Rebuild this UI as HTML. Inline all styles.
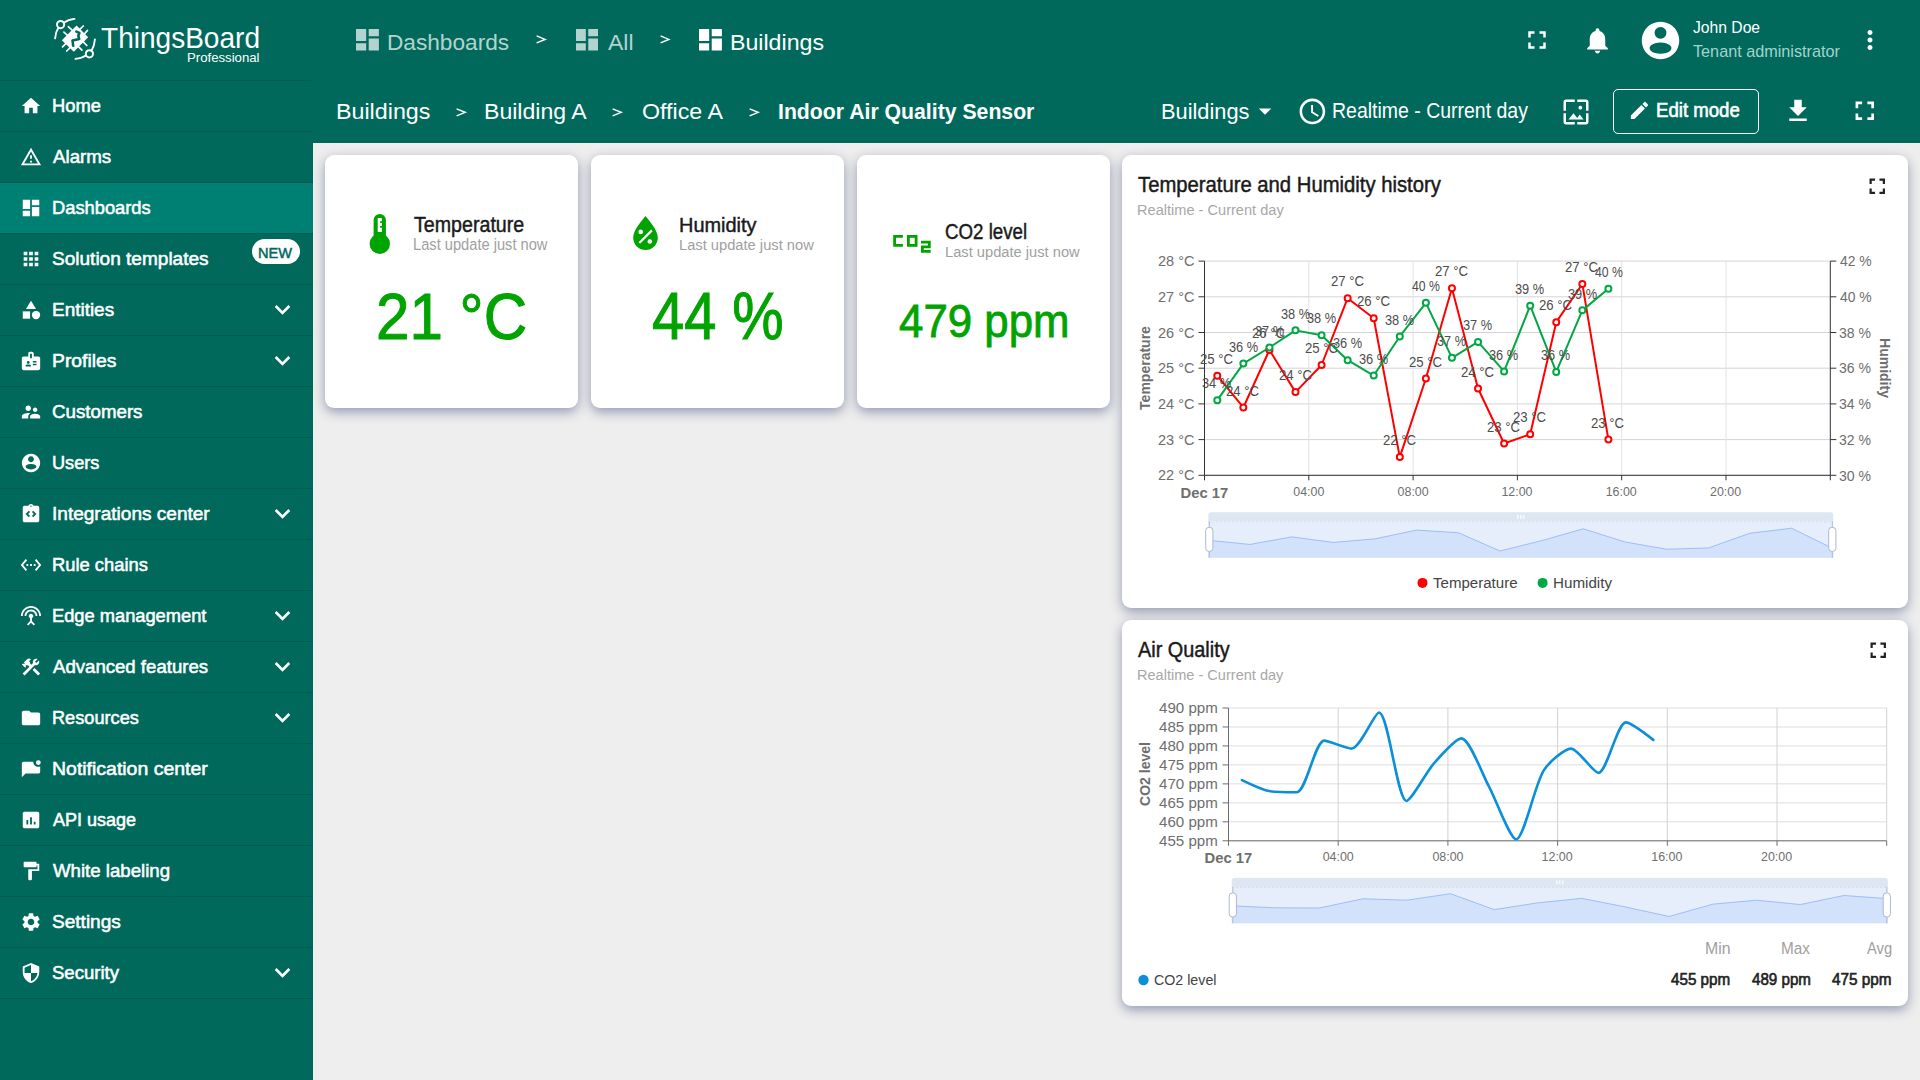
<!DOCTYPE html><html><head><meta charset="utf-8"><title>ThingsBoard</title><style>
*{margin:0;padding:0;box-sizing:border-box}
html,body{width:1920px;height:1080px;overflow:hidden;background:#eee;font-family:"Liberation Sans",sans-serif}
.abs{position:absolute}
.t{position:absolute;white-space:nowrap;line-height:1}
.c{transform:translate(-50%,-50%)}
.r{transform:translate(-100%,-50%)}
.l{transform:translate(0,-50%)}
.card{position:absolute;background:#fff;border-radius:9px;box-shadow:0 4px 12px rgba(25,40,95,0.42)}
</style></head><body>
<div class="abs" style="left:0;top:0;width:313px;height:1080px;background:#00695c"></div>
<svg class="abs" style="left:50px;top:14px;width:50px;height:50px" viewBox="0 0 50 50" fill="none" stroke="#fff" stroke-linecap="round">
  <circle cx="10.6" cy="10.6" r="3.6" stroke-width="2"/>
  <path d="M14.2 8.6 Q18 5.6 24.5 4.9" stroke-width="1.9"/>
  <path d="M8.4 13.8 Q5.6 18 5.1 24.3" stroke-width="1.9"/>
  <circle cx="39.4" cy="39.8" r="3.6" stroke-width="2"/>
  <path d="M35.8 41.6 Q32 44.4 25.5 44.9" stroke-width="1.9"/>
  <path d="M41.6 36.4 Q44.4 32 44.9 25.5" stroke-width="1.9"/>
  <path d="M26.6 11.6 L38.2 23.2 L23.8 37.8 L11.8 26.2 Z" fill="#fff" stroke="none"/>
  <path d="M13.9 18.1 L17.5 21.4 M18.3 12.7 L21.8 15.8 M29.5 15.6 L33.3 12 M34.2 20.2 L37.5 16.4 M33 27.7 L36.8 31.5 M28.2 32.3 L31.9 36.1 M12.5 32.9 L16.3 29.1 M16.7 37 L20.4 33.3" stroke-width="1.7"/>
  <path d="M26.4 17.6 L29.4 18.9 L28.3 21.7 L29.2 25 L22.5 26.4 L23.2 31.8" stroke="#00695c" stroke-width="2.6" stroke-linejoin="round"/>
 </svg>
<div class="t" style="left:101.00px;top:24px;font-size:28.99px;font-weight:normal;color:#fff;transform:scaleX(0.9674);transform-origin:0 0;">ThingsBoard</div>
<div class="t" style="left:186.50px;top:52px;font-size:12.75px;font-weight:normal;color:#fff;transform:scaleX(1.0337);transform-origin:0 0;">Professional</div>
<div class="abs" style="left:0;top:80px;width:313px;height:1px;background:#005b50"></div>
<div class="abs" style="left:0;top:131px;width:313px;height:1px;background:#005b50"></div>
<svg class="abs" style="left:20px;top:95px;width:22px;height:22px;fill:#fff" viewBox="0 0 24 24"><path d="M10 20v-6h4v6h5v-8h3L12 3 2 12h3v8z"/></svg>
<div class="t" style="left:52.12px;top:96px;font-size:19.13px;font-weight:normal;color:#fff;transform:scaleX(0.9596);transform-origin:0 0;-webkit-text-stroke:0.55px #fff;">Home</div>
<div class="abs" style="left:0;top:182px;width:313px;height:1px;background:#005b50"></div>
<svg class="abs" style="left:20px;top:146px;width:22px;height:22px;fill:#fff" viewBox="0 0 24 24"><path d="M12 5.99L19.53 19H4.47L12 5.99M12 2L1 21h22L12 2zm1 14h-2v2h2v-2zm0-6h-2v4h2v-4z"/></svg>
<div class="t" style="left:53.10px;top:147px;font-size:19.13px;font-weight:normal;color:#fff;transform:scaleX(0.9792);transform-origin:0 0;-webkit-text-stroke:0.55px #fff;">Alarms</div>
<div class="abs" style="left:0;top:183px;width:313px;height:50px;background:#008073"></div>
<div class="abs" style="left:0;top:233px;width:313px;height:1px;background:#005b50"></div>
<svg class="abs" style="left:20px;top:197px;width:22px;height:22px;fill:#fff" viewBox="0 0 24 24"><path d="M3 13h8V3H3v10zm0 8h8v-6H3v6zm10 0h8V11h-8v10zm0-18v6h8V3h-8z"/></svg>
<div class="t" style="left:52.11px;top:198px;font-size:19.13px;font-weight:normal;color:#fff;transform:scaleX(0.9574);transform-origin:0 0;-webkit-text-stroke:0.55px #fff;">Dashboards</div>
<div class="abs" style="left:0;top:284px;width:313px;height:1px;background:#005b50"></div>
<svg class="abs" style="left:20px;top:248px;width:22px;height:22px;fill:#fff" viewBox="0 0 24 24"><path d="M4 8h4V4H4v4zm6 12h4v-4h-4v4zm-6 0h4v-4H4v4zm0-6h4v-4H4v4zm6 0h4v-4h-4v4zm6-10v4h4V4h-4zm-6 4h4V4h-4v4zm6 6h4v-4h-4v4zm0 6h4v-4h-4v4z"/></svg>
<div class="t" style="left:52.10px;top:249px;font-size:19.13px;font-weight:normal;color:#fff;transform:scaleX(0.9960);transform-origin:0 0;-webkit-text-stroke:0.55px #fff;">Solution templates</div>
<div class="abs" style="left:251.6px;top:239.3px;width:48.6px;height:25px;border-radius:12.5px;background:#fff"></div>
<div class="t" style="left:258.00px;top:245px;font-size:15.51px;font-weight:normal;color:#00695c;transform:scaleX(0.9401);transform-origin:0 0;-webkit-text-stroke:0.5px #00695c;">NEW</div>
<div class="abs" style="left:0;top:335px;width:313px;height:1px;background:#005b50"></div>
<svg class="abs" style="left:20px;top:299px;width:22px;height:22px;fill:#fff" viewBox="0 0 24 24"><path d="M12 2l-5.5 9h11z"/><circle cx="17.5" cy="17.5" r="4.5"/><path d="M3 13.5h8v8H3z"/></svg>
<div class="t" style="left:52.12px;top:300px;font-size:19.13px;font-weight:normal;color:#fff;transform:scaleX(0.9912);transform-origin:0 0;-webkit-text-stroke:0.55px #fff;">Entities</div>
<svg class="abs" style="left:267.1px;top:294.3px;width:31px;height:31px;fill:#fff" viewBox="0 0 24 24"><path d="M16.59 8.59L12 13.17 7.41 8.59 6 10l6 6 6-6z"/></svg>
<div class="abs" style="left:0;top:386px;width:313px;height:1px;background:#005b50"></div>
<svg class="abs" style="left:20px;top:350px;width:22px;height:22px;fill:#fff" viewBox="0 0 24 24"><path d="M20 7h-5V4c0-1.1-.9-2-2-2h-2c-1.1 0-2 .9-2 2v3H4c-1.1 0-2 .9-2 2v11c0 1.1.9 2 2 2h16c1.1 0 2-.9 2-2V9c0-1.1-.9-2-2-2zM9 12c.83 0 1.5.67 1.5 1.5S9.83 15 9 15s-1.5-.67-1.5-1.5S8.17 12 9 12zm3 6H6v-.43c0-.6.36-1.15.92-1.39.64-.28 1.34-.43 2.08-.43s1.44.15 2.08.43c.55.24.92.78.92 1.39V18zm1-9h-2V4h2v5zm5 7.5h-4V15h4v1.5zm0-3h-4V12h4v1.5z"/></svg>
<div class="t" style="left:52.12px;top:351px;font-size:19.13px;font-weight:normal;color:#fff;transform:scaleX(1.0102);transform-origin:0 0;-webkit-text-stroke:0.55px #fff;">Profiles</div>
<svg class="abs" style="left:267.1px;top:345.3px;width:31px;height:31px;fill:#fff" viewBox="0 0 24 24"><path d="M16.59 8.59L12 13.17 7.41 8.59 6 10l6 6 6-6z"/></svg>
<div class="abs" style="left:0;top:437px;width:313px;height:1px;background:#005b50"></div>
<svg class="abs" style="left:20px;top:401px;width:22px;height:22px;fill:#fff" viewBox="0 0 24 24"><path d="M16.5 12c1.38 0 2.49-1.12 2.49-2.5S17.88 7 16.5 7C15.12 7 14 8.12 14 9.5s1.12 2.5 2.5 2.5zM9 11c1.66 0 2.99-1.34 2.99-3S10.66 5 9 5C7.34 5 6 6.34 6 8s1.34 3 3 3zm7.5 3c-1.83 0-5.5.92-5.5 2.75V19h11v-2.25c0-1.83-3.67-2.75-5.5-2.75zM9 13c-2.33 0-7 1.17-7 3.5V19h7v-2.25c0-.85.33-2.34 2.37-3.47C10.5 13.1 9.66 13 9 13z"/></svg>
<div class="t" style="left:52.10px;top:402px;font-size:19.13px;font-weight:normal;color:#fff;transform:scaleX(0.9794);transform-origin:0 0;-webkit-text-stroke:0.55px #fff;">Customers</div>
<div class="abs" style="left:0;top:488px;width:313px;height:1px;background:#005b50"></div>
<svg class="abs" style="left:20px;top:452px;width:22px;height:22px;fill:#fff" viewBox="0 0 24 24"><path fill-rule="evenodd" d="M12 2a10 10 0 1 0 0.001 0zM12 4.75a3.15 3.15 0 1 0 0.001 0zM12 13.0a5.85 3.05 0 1 0 0.001 0z"/></svg>
<div class="t" style="left:52.12px;top:453px;font-size:19.13px;font-weight:normal;color:#fff;transform:scaleX(0.9496);transform-origin:0 0;-webkit-text-stroke:0.55px #fff;">Users</div>
<div class="abs" style="left:0;top:539px;width:313px;height:1px;background:#005b50"></div>
<svg class="abs" style="left:20px;top:503px;width:22px;height:22px;fill:#fff" viewBox="0 0 24 24"><path d="M19 3h-4.18C14.4 1.84 13.3 1 12 1s-2.4.84-2.82 2H5c-1.1 0-2 .9-2 2v14c0 1.1.9 2 2 2h14c1.1 0 2-.9 2-2V5c0-1.1-.9-2-2-2zM11 14.17l-1.41 1.42L6 12l3.59-3.59L11 9.83 8.83 12 11 14.17zM12 4.25c-.41 0-.75-.34-.75-.75s.34-.75.75-.75.75.34.75.75-.34.75-.75.75zm2.41 11.34L13 14.17 15.17 12 13 9.83l1.41-1.42L18 12l-3.59 3.59z"/></svg>
<div class="t" style="left:52.11px;top:504px;font-size:19.13px;font-weight:normal;color:#fff;transform:scaleX(0.9963);transform-origin:0 0;-webkit-text-stroke:0.55px #fff;">Integrations center</div>
<svg class="abs" style="left:267.1px;top:498.3px;width:31px;height:31px;fill:#fff" viewBox="0 0 24 24"><path d="M16.59 8.59L12 13.17 7.41 8.59 6 10l6 6 6-6z"/></svg>
<div class="abs" style="left:0;top:590px;width:313px;height:1px;background:#005b50"></div>
<svg class="abs" style="left:20px;top:554px;width:22px;height:22px;fill:#fff" viewBox="0 0 24 24"><path d="M7.77 6.76L6.23 5.48.82 12l5.41 6.52 1.54-1.28L3.42 12l4.35-5.24zM7 13h2v-2H7v2zm10-2h-2v2h2v-2zm-6 2h2v-2h-2v2zm6.77-7.52l-1.54 1.28L20.58 12l-4.35 5.24 1.54 1.28L23.18 12l-5.41-6.52z"/></svg>
<div class="t" style="left:52.11px;top:555px;font-size:19.13px;font-weight:normal;color:#fff;transform:scaleX(0.9597);transform-origin:0 0;-webkit-text-stroke:0.55px #fff;">Rule chains</div>
<div class="abs" style="left:0;top:641px;width:313px;height:1px;background:#005b50"></div>
<svg class="abs" style="left:20px;top:605px;width:22px;height:22px;fill:#fff" viewBox="0 0 24 24"><path d="M12 5c-3.87 0-7 3.13-7 7h2c0-2.76 2.24-5 5-5s5 2.24 5 5h2c0-3.87-3.13-7-7-7zm1 9.29c.88-.39 1.5-1.26 1.5-2.29 0-1.38-1.12-2.5-2.5-2.5S9.5 10.62 9.5 12c0 1.020.62 1.9 1.5 2.29v3.3L7.59 21 9 22.41l3-3 3 3L16.41 21 13 17.59v-3.3zM12 1C5.93 1 1 5.93 1 12h2c0-4.970 4.030-9 9-9s9 4.03 9 9h2c0-6.07-4.930-11-11-11z"/></svg>
<div class="t" style="left:52.10px;top:606px;font-size:19.13px;font-weight:normal;color:#fff;transform:scaleX(0.9561);transform-origin:0 0;-webkit-text-stroke:0.55px #fff;">Edge management</div>
<svg class="abs" style="left:267.1px;top:600.3px;width:31px;height:31px;fill:#fff" viewBox="0 0 24 24"><path d="M16.59 8.59L12 13.17 7.41 8.59 6 10l6 6 6-6z"/></svg>
<div class="abs" style="left:0;top:692px;width:313px;height:1px;background:#005b50"></div>
<svg class="abs" style="left:20px;top:656px;width:22px;height:22px;fill:#fff" viewBox="0 0 24 24"><path d="M13.783 15.172l2.121-2.121 5.996 5.996-2.121 2.121zM17.5 10c1.93 0 3.5-1.57 3.5-3.5 0-.58-.16-1.12-.41-1.6l-2.7 2.7-1.49-1.49 2.7-2.7c-.48-.25-1.02-.41-1.6-.41C15.57 3 14 4.57 14 6.5c0 .41.08.8.21 1.16l-1.85 1.85-1.78-1.78.71-.71-1.41-1.41L12 3.49c-1.17-1.17-3.07-1.17-4.24 0L4.22 7.03l1.41 1.41H2.81l-.71.71 3.54 3.54.71-.71V9.15l1.41 1.41.71-.71 1.78 1.78-7.41 7.410 2.12 2.12L16.34 9.79c.36.13.75.21 1.16.21z"/></svg>
<div class="t" style="left:53.10px;top:657px;font-size:19.13px;font-weight:normal;color:#fff;transform:scaleX(0.9731);transform-origin:0 0;-webkit-text-stroke:0.55px #fff;">Advanced features</div>
<svg class="abs" style="left:267.1px;top:651.3px;width:31px;height:31px;fill:#fff" viewBox="0 0 24 24"><path d="M16.59 8.59L12 13.17 7.41 8.59 6 10l6 6 6-6z"/></svg>
<div class="abs" style="left:0;top:743px;width:313px;height:1px;background:#005b50"></div>
<svg class="abs" style="left:20px;top:707px;width:22px;height:22px;fill:#fff" viewBox="0 0 24 24"><path d="M10 4H4c-1.1 0-1.99.9-1.99 2L2 18c0 1.1.9 2 2 2h16c1.1 0 2-.9 2-2V8c0-1.1-.9-2-2-2h-8l-2-2z"/></svg>
<div class="t" style="left:52.11px;top:708px;font-size:19.13px;font-weight:normal;color:#fff;transform:scaleX(0.9504);transform-origin:0 0;-webkit-text-stroke:0.55px #fff;">Resources</div>
<svg class="abs" style="left:267.1px;top:702.3px;width:31px;height:31px;fill:#fff" viewBox="0 0 24 24"><path d="M16.59 8.59L12 13.17 7.41 8.59 6 10l6 6 6-6z"/></svg>
<div class="abs" style="left:0;top:794px;width:313px;height:1px;background:#005b50"></div>
<svg class="abs" style="left:20px;top:758px;width:22px;height:22px;fill:#fff" viewBox="0 0 24 24"><circle cx="20" cy="5" r="2.6"/><path d="M15.6 4H4c-1.1 0-2 .9-2 2v15l4-4h14c1.1 0 2-.9 2-2V9.2c-.6.3-1.3.4-2 .4-3.1 0-5.6-2.5-5.6-5.6z"/></svg>
<div class="t" style="left:52.11px;top:759px;font-size:19.13px;font-weight:normal;color:#fff;transform:scaleX(1.0184);transform-origin:0 0;-webkit-text-stroke:0.55px #fff;">Notification center</div>
<div class="abs" style="left:0;top:845px;width:313px;height:1px;background:#005b50"></div>
<svg class="abs" style="left:20px;top:809px;width:22px;height:22px;fill:#fff" viewBox="0 0 24 24"><path d="M19 3H5c-1.1 0-2 .9-2 2v14c0 1.1.9 2 2 2h14c1.1 0 2-.9 2-2V5c0-1.1-.9-2-2-2zM9 17H7v-5h2v5zm4 0h-2V9h2v8zm4 0h-2v-3h2v3z"/></svg>
<div class="t" style="left:53.10px;top:810px;font-size:19.13px;font-weight:normal;color:#fff;transform:scaleX(0.9426);transform-origin:0 0;-webkit-text-stroke:0.55px #fff;">API usage</div>
<div class="abs" style="left:0;top:896px;width:313px;height:1px;background:#005b50"></div>
<svg class="abs" style="left:20px;top:860px;width:22px;height:22px;fill:#fff" viewBox="0 0 24 24"><path d="M18 4V3c0-.55-.45-1-1-1H5c-.55 0-1 .45-1 1v4c0 .55.45 1 1 1h12c.55 0 1-.45 1-1V6h1v4H9v11c0 .55.45 1 1 1h2c.55 0 1-.45 1-1v-9h8V4h-3z"/></svg>
<div class="t" style="left:53.10px;top:861px;font-size:19.13px;font-weight:normal;color:#fff;transform:scaleX(0.9748);transform-origin:0 0;-webkit-text-stroke:0.55px #fff;">White labeling</div>
<div class="abs" style="left:0;top:947px;width:313px;height:1px;background:#005b50"></div>
<svg class="abs" style="left:20px;top:911px;width:22px;height:22px;fill:#fff" viewBox="0 0 24 24"><path d="M19.14 12.94c.04-.3.06-.61.06-.94 0-.32-.02-.64-.07-.94l2.03-1.58c.18-.14.23-.41.12-.61l-1.92-3.32c-.12-.22-.37-.29-.59-.22l-2.39.96c-.5-.38-1.03-.7-1.62-.94l-.36-2.54c-.04-.24-.24-.41-.48-.41h-3.84c-.24 0-.43.17-.47.41l-.36 2.54c-.59.24-1.13.57-1.62.94l-2.39-.96c-.22-.08-.47 0-.59.22L2.74 8.87c-.12.21-.08.47.12.61l2.03 1.58c-.05.3-.09.63-.09.94s.02.64.07.94l-2.030 1.58c-.18.14-.23.41-.12.61l1.92 3.32c.12.22.37.29.59.22l2.39-.96c.5.38 1.03.7 1.62.94l.36 2.54c.05.24.24.41.48.41h3.84c.24 0 .44-.17.47-.41l.36-2.54c.59-.24 1.13-.56 1.62-.94l2.39.96c.22.08.47 0 .59-.22l1.92-3.32c.12-.22.07-.47-.12-.61l-2.01-1.58zM12 15.6c-1.98 0-3.6-1.62-3.6-3.6s1.62-3.6 3.6-3.6 3.6 1.62 3.6 3.6-1.62 3.6-3.6 3.6z"/></svg>
<div class="t" style="left:52.10px;top:912px;font-size:19.13px;font-weight:normal;color:#fff;transform:scaleX(0.9967);transform-origin:0 0;-webkit-text-stroke:0.55px #fff;">Settings</div>
<div class="abs" style="left:0;top:998px;width:313px;height:1px;background:#005b50"></div>
<svg class="abs" style="left:20px;top:962px;width:22px;height:22px;fill:#fff" viewBox="0 0 24 24"><path d="M12 1L3 5v6c0 5.55 3.84 10.74 9 12 5.16-1.26 9-6.45 9-12V5l-9-4zm0 10.99h7c-.53 4.12-3.28 7.790-7 8.94V12H5V6.3l7-3.11v8.8z"/></svg>
<div class="t" style="left:52.11px;top:963px;font-size:19.13px;font-weight:normal;color:#fff;transform:scaleX(0.9707);transform-origin:0 0;-webkit-text-stroke:0.55px #fff;">Security</div>
<svg class="abs" style="left:267.1px;top:957.3px;width:31px;height:31px;fill:#fff" viewBox="0 0 24 24"><path d="M16.59 8.59L12 13.17 7.41 8.59 6 10l6 6 6-6z"/></svg>
<div class="abs" style="left:313px;top:0;width:1607px;height:143px;background:#00695c"></div>
<svg class="abs" style="left:356.1px;top:29.3px;width:22.9px;height:21.4px;fill:#b3d3ce" viewBox="3 3 18 18" preserveAspectRatio="none"><path d="M3 13h8V3H3v10zm0 8h8v-6H3v6zm10 0h8V11h-8v10zm0-18v6h8V3h-8z"/></svg>
<div class="t" style="left:387.00px;top:32px;font-size:22.32px;font-weight:normal;color:#b3d3ce;transform:scaleX(1.0150);transform-origin:0 0;">Dashboards</div>

<svg class="abs" style="left:575.7px;top:29.3px;width:22.1px;height:21.4px;fill:#b3d3ce" viewBox="3 3 18 18" preserveAspectRatio="none"><path d="M3 13h8V3H3v10zm0 8h8v-6H3v6zm10 0h8V11h-8v10zm0-18v6h8V3h-8z"/></svg>
<div class="t" style="left:608.20px;top:32px;font-size:22.32px;font-weight:normal;color:#b3d3ce;transform:scaleX(1.0290);transform-origin:0 0;">All</div>
<svg class="abs" style="left:698.9px;top:29.3px;width:22.9px;height:21.4px;fill:#fff" viewBox="3 3 18 18" preserveAspectRatio="none"><path d="M3 13h8V3H3v10zm0 8h8v-6H3v6zm10 0h8V11h-8v10zm0-18v6h8V3h-8z"/></svg>
<div class="t" style="left:729.90px;top:32px;font-size:22.32px;font-weight:normal;color:#fff;transform:scaleX(1.0381);transform-origin:0 0;">Buildings</div>
<svg class="abs" style="left:1522.4px;top:25px;width:30px;height:30px;fill:#fff" viewBox="0 0 24 24"><path d="M7 14H5v5h5v-2H7v-3zm-2-4h2V7h3V5H5v5zm12 7h-3v2h5v-5h-2v3zM14 5v2h3v3h2V5h-5z"/></svg>
<svg class="abs" style="left:1582px;top:24.5px;width:31px;height:31px;fill:#fff" viewBox="0 0 24 24"><path d="M12 22c1.1 0 2-.9 2-2h-4c0 1.1.89 2 2 2zm6-6v-5c0-3.07-1.64-5.64-4.5-6.32V4c0-.83-.67-1.5-1.5-1.5s-1.5.67-1.5 1.5v.68C7.63 5.36 6 7.92 6 11v5l-2 2v1h16v-1l-2-2z"/></svg>
<svg class="abs" style="left:1637.5px;top:18px;width:45px;height:45px;fill:#fff" viewBox="0 0 24 24"><path fill-rule="evenodd" d="M12 2a10 10 0 1 0 0.001 0zM12 4.75a3.15 3.15 0 1 0 0.001 0zM12 13.0a5.85 3.05 0 1 0 0.001 0z"/></svg>
<div class="t" style="left:1692.90px;top:20px;font-size:16.88px;font-weight:normal;color:#fff;transform:scaleX(0.9293);transform-origin:0 0;">John Doe</div>
<div class="t" style="left:1692.90px;top:44px;font-size:16.96px;font-weight:normal;color:#a3d3cc;transform:scaleX(0.9572);transform-origin:0 0;">Tenant administrator</div>
<svg class="abs" style="left:1855px;top:25px;width:30px;height:30px;fill:#fff" viewBox="0 0 24 24"><path d="M12 8c1.1 0 2-.9 2-2s-.9-2-2-2-2 .9-2 2 .9 2 2 2zm0 2c-1.1 0-2 .9-2 2s.9 2 2 2 2-.9 2-2-.9-2-2-2zm0 6c-1.1 0-2 .9-2 2s.9 2 2 2 2-.9 2-2-.9-2-2-2z"/></svg>
<div class="t" style="left:336.29px;top:100px;font-size:22.90px;font-weight:normal;color:#fff;transform:scaleX(1.0162);transform-origin:0 0;">Buildings</div>
<div class="t" style="left:484.29px;top:100px;font-size:22.90px;font-weight:normal;color:#fff;transform:scaleX(1.0085);transform-origin:0 0;">Building A</div>
<div class="t" style="left:642.10px;top:100px;font-size:22.90px;font-weight:normal;color:#fff;transform:scaleX(1.0145);transform-origin:0 0;">Office A</div>
<div class="t" style="left:778.40px;top:101px;font-size:22.46px;font-weight:bold;color:#fff;transform:scaleX(0.9456);transform-origin:0 0;">Indoor Air Quality Sensor</div>
<div class="t" style="left:1160.80px;top:100px;font-size:22.90px;font-weight:normal;color:#fff;transform:scaleX(0.9520);transform-origin:0 0;">Buildings</div>
<svg class="abs" style="left:1249.5px;top:96px;width:30px;height:30px;fill:#fff" viewBox="0 0 24 24"><path d="M7 10l5 5 5-5z"/></svg>
<svg class="abs" style="left:1296.8px;top:95.5px;width:30.8px;height:30.8px;fill:#fff" viewBox="0 0 24 24"><path d="M11.99 2C6.47 2 2 6.48 2 12s4.47 10 9.99 10C17.52 22 22 17.52 22 12S17.52 2 11.99 2zM12 20c-4.42 0-8-3.58-8-8s3.58-8 8-8 8 3.58 8 8-3.58 8-8 8zm.5-13H11v6l5.25 3.15.75-1.23-4.5-2.67z"/></svg>
<div class="t" style="left:1331.80px;top:100px;font-size:22.32px;font-weight:normal;color:#fff;transform:scaleX(0.8728);transform-origin:0 0;">Realtime - Current day</div>
<svg class="abs" style="left:1560.5px;top:96.5px;width:30px;height:30px;fill:#fff" viewBox="0 0 24 24"><path d="M4 4h7V2H4c-1.1 0-2 .9-2 2v7h2V4zm6 9l-4 5h12l-3-4-2.03 2.71L10 13zm7-4.5c0-.83-.67-1.5-1.5-1.5S14 7.67 14 8.5s.67 1.5 1.5 1.5S17 9.33 17 8.5zM20 2h-7v2h7v7h2V4c0-1.1-.9-2-2-2zm0 18h-7v2h7c1.1 0 2-.9 2-2v-7h-2v7zM4 13H2v7c0 1.1.9 2 2 2h7v-2H4v-7z"/></svg>
<div class="abs" style="left:1613.3px;top:89.3px;width:146.2px;height:44.5px;border:1.3px solid #fff;border-radius:5px"></div>
<svg class="abs" style="left:1627.6px;top:98.9px;width:22.9px;height:22.9px;fill:#fff" viewBox="0 0 24 24"><path d="M3 17.25V21h3.75L17.81 9.94l-3.75-3.75L3 17.25zM20.71 7.04c.39-.39.39-1.02 0-1.41l-2.34-2.34c-.39-.39-1.02-.39-1.41 0l-1.83 1.83 3.75 3.75 1.83-1.83z"/></svg>
<div class="t" style="left:1656.01px;top:100px;font-size:20.07px;font-weight:normal;color:#fff;transform:scaleX(0.9281);transform-origin:0 0;-webkit-text-stroke:0.6px #fff;">Edit mode</div>
<svg class="abs" style="left:1782.5px;top:96.25px;width:30px;height:30px;fill:#fff" viewBox="0 0 24 24"><path d="M19 9h-4V3H9v6H5l7 7 7-7zM5 18v2h14v-2H5z"/></svg>
<svg class="abs" style="left:1849.2px;top:95.3px;width:31.5px;height:31.5px;fill:#fff" viewBox="0 0 24 24"><path d="M7 14H5v5h5v-2H7v-3zm-2-4h2V7h3V5H5v5zm12 7h-3v2h5v-5h-2v3zM14 5v2h3v3h2V5h-5z"/></svg>
<svg class="abs" style="left:535.8px;top:34.8px;width:9.900000000000091px;height:8.800000000000004px;overflow:visible" viewBox="0 0 10 9" preserveAspectRatio="none"><path d="M0.6 0.9 L9.2 4.5 L0.6 8.1" fill="none" stroke="#fff" stroke-width="1.5"/></svg>
<svg class="abs" style="left:659.8px;top:34.8px;width:9.600000000000023px;height:8.800000000000004px;overflow:visible" viewBox="0 0 10 9" preserveAspectRatio="none"><path d="M0.6 0.9 L9.2 4.5 L0.6 8.1" fill="none" stroke="#fff" stroke-width="1.5"/></svg>
<svg class="abs" style="left:455.8px;top:108px;width:10.0px;height:8.700000000000003px;overflow:visible" viewBox="0 0 10 9" preserveAspectRatio="none"><path d="M0.6 0.9 L9.2 4.5 L0.6 8.1" fill="none" stroke="#fff" stroke-width="1.5"/></svg>
<svg class="abs" style="left:612.3px;top:108px;width:10.0px;height:8.700000000000003px;overflow:visible" viewBox="0 0 10 9" preserveAspectRatio="none"><path d="M0.6 0.9 L9.2 4.5 L0.6 8.1" fill="none" stroke="#fff" stroke-width="1.5"/></svg>
<svg class="abs" style="left:749.2px;top:108px;width:9.899999999999977px;height:8.700000000000003px;overflow:visible" viewBox="0 0 10 9" preserveAspectRatio="none"><path d="M0.6 0.9 L9.2 4.5 L0.6 8.1" fill="none" stroke="#fff" stroke-width="1.5"/></svg>
<div class="card" style="left:325px;top:155px;width:253px;height:253px"></div>
<div class="card" style="left:591px;top:155px;width:253px;height:253px"></div>
<div class="card" style="left:857px;top:155px;width:253px;height:253px"></div>
<div class="card" style="left:1122.2px;top:155px;width:786px;height:453px"></div>
<div class="card" style="left:1122.2px;top:620px;width:786px;height:386px"></div>
<svg class="abs" style="left:360px;top:205px;width:40px;height:55px" viewBox="360 205 40 55">
      <rect x="373.6" y="213.9" width="12.3" height="28" rx="6.1" fill="#00a300"/>
      <circle cx="379.8" cy="243.8" r="10.2" fill="#00a300"/>
      <rect x="377.7" y="218" width="4.2" height="14" rx="0.5" fill="#fff"/>
      <rect x="380" y="221.2" width="2.2" height="1.6" fill="#00a300"/>
      <rect x="380" y="226" width="2.2" height="1.6" fill="#00a300"/>
    </svg>
<div class="t" style="left:414.00px;top:214px;font-size:21.74px;font-weight:normal;color:#1a1a1a;transform:scaleX(0.9034);transform-origin:0 0;-webkit-text-stroke:0.45px #1a1a1a;">Temperature</div>
<div class="t" style="left:413.00px;top:237px;font-size:15.65px;font-weight:normal;color:#a0a0a0;transform:scaleX(0.9371);transform-origin:0 0;">Last update just now</div>
<div class="t" style="left:376.22px;top:285px;font-size:64.86px;font-weight:normal;color:#00a300;transform:scaleX(0.9271);transform-origin:0 0;-webkit-text-stroke:1.0px #00a300;">21 °C</div>
<svg class="abs" style="left:625px;top:210px;width:40px;height:45px" viewBox="625 210 40 45">
      <path d="M645.5 216 C650 222 657.8 230 657.8 237.8 A12.3 12.3 0 0 1 633.2 237.8 C633.2 230 641 222 645.5 216Z" fill="#00a300"/>
      <circle cx="640.7" cy="231.9" r="2.3" fill="#fff"/>
      <circle cx="649.8" cy="241.5" r="2.3" fill="#fff"/>
      <path d="M639.3 243 L651.9 230.4" stroke="#fff" stroke-width="2.2"/>
    </svg>
<div class="t" style="left:679.01px;top:215px;font-size:20.87px;font-weight:normal;color:#1a1a1a;transform:scaleX(0.9560);transform-origin:0 0;-webkit-text-stroke:0.45px #1a1a1a;">Humidity</div>
<div class="t" style="left:679.00px;top:237px;font-size:15.22px;font-weight:normal;color:#a0a0a0;transform:scaleX(0.9653);transform-origin:0 0;">Last update just now</div>
<div class="t" style="left:651.91px;top:283px;font-size:66.67px;font-weight:normal;color:#00a300;transform:scaleX(0.8670);transform-origin:0 0;-webkit-text-stroke:1.0px #00a300;">44 %</div>
<svg class="abs" style="left:890px;top:230px;width:45px;height:26px" viewBox="890 230 45 26" fill="none" stroke="#00a300" stroke-width="2.8">
      <path d="M902.9 236.4 H894.6 V245.4 H902.9"/>
      <rect x="908.4" y="236.4" width="7.7" height="9" />
      <path d="M921 242.2 H929.3 V246.8 H922.4 V251.4 H930.7" />
    </svg>
<div class="t" style="left:945.01px;top:222px;font-size:21.29px;font-weight:normal;color:#1a1a1a;transform:scaleX(0.8792);transform-origin:0 0;-webkit-text-stroke:0.45px #1a1a1a;">CO2 level</div>
<div class="t" style="left:945.00px;top:244px;font-size:15.51px;font-weight:normal;color:#a0a0a0;transform:scaleX(0.9473);transform-origin:0 0;">Last update just now</div>
<div class="t" style="left:899.00px;top:298px;font-size:46.38px;font-weight:normal;color:#00a300;transform:scaleX(0.9452);transform-origin:0 0;-webkit-text-stroke:0.8px #00a300;">479 ppm</div>
<div class="t" style="left:1138.00px;top:175px;font-size:21.45px;font-weight:normal;color:#1a1a1a;transform:scaleX(0.9449);transform-origin:0 0;-webkit-text-stroke:0.45px #1a1a1a;">Temperature and Humidity history</div>
<div class="t" style="left:1137.00px;top:202px;font-size:15.51px;font-weight:normal;color:#a8a8a8;transform:scaleX(0.9408);transform-origin:0 0;">Realtime - Current day</div>
<svg class="abs" style="left:1864.2px;top:172.8px;width:26.5px;height:26.5px;fill:#222" viewBox="0 0 24 24"><path d="M7 14H5v5h5v-2H7v-3zm-2-4h2V7h3V5H5v5zm12 7h-3v2h5v-5h-2v3zM14 5v2h3v3h2V5h-5z"/></svg>
<svg class="abs" style="left:0;top:0;width:1920px;height:1080px;overflow:visible" viewBox="0 0 1920 1080">
<line x1="1204.5" y1="261.1" x2="1830.3" y2="261.1" stroke="#d4d4d4" stroke-width="1"/>
<line x1="1204.5" y1="296.8" x2="1830.3" y2="296.8" stroke="#d4d4d4" stroke-width="1"/>
<line x1="1204.5" y1="332.5" x2="1830.3" y2="332.5" stroke="#d4d4d4" stroke-width="1"/>
<line x1="1204.5" y1="368.2" x2="1830.3" y2="368.2" stroke="#d4d4d4" stroke-width="1"/>
<line x1="1204.5" y1="403.9" x2="1830.3" y2="403.9" stroke="#d4d4d4" stroke-width="1"/>
<line x1="1204.5" y1="439.6" x2="1830.3" y2="439.6" stroke="#d4d4d4" stroke-width="1"/>
<line x1="1204.5" y1="475.3" x2="1830.3" y2="475.3" stroke="#d4d4d4" stroke-width="1"/>
<line x1="1308.8" y1="261.1" x2="1308.8" y2="475.3" stroke="#e2e2e2" stroke-width="1"/>
<line x1="1413.1" y1="261.1" x2="1413.1" y2="475.3" stroke="#e2e2e2" stroke-width="1"/>
<line x1="1517.4" y1="261.1" x2="1517.4" y2="475.3" stroke="#e2e2e2" stroke-width="1"/>
<line x1="1621.7" y1="261.1" x2="1621.7" y2="475.3" stroke="#e2e2e2" stroke-width="1"/>
<line x1="1726" y1="261.1" x2="1726" y2="475.3" stroke="#e2e2e2" stroke-width="1"/>
<line x1="1204.5" y1="261.1" x2="1204.5" y2="475.3" stroke="#333" stroke-width="1"/>
<line x1="1830.3" y1="261.1" x2="1830.3" y2="475.3" stroke="#333" stroke-width="1"/>
<line x1="1204.5" y1="475.3" x2="1830.3" y2="475.3" stroke="#333" stroke-width="1"/>
<line x1="1198.5" y1="261.1" x2="1204.5" y2="261.1" stroke="#333" stroke-width="1"/>
<line x1="1830.3" y1="261.1" x2="1836.3" y2="261.1" stroke="#333" stroke-width="1"/>
<line x1="1198.5" y1="296.8" x2="1204.5" y2="296.8" stroke="#333" stroke-width="1"/>
<line x1="1830.3" y1="296.8" x2="1836.3" y2="296.8" stroke="#333" stroke-width="1"/>
<line x1="1198.5" y1="332.5" x2="1204.5" y2="332.5" stroke="#333" stroke-width="1"/>
<line x1="1830.3" y1="332.5" x2="1836.3" y2="332.5" stroke="#333" stroke-width="1"/>
<line x1="1198.5" y1="368.2" x2="1204.5" y2="368.2" stroke="#333" stroke-width="1"/>
<line x1="1830.3" y1="368.2" x2="1836.3" y2="368.2" stroke="#333" stroke-width="1"/>
<line x1="1198.5" y1="403.9" x2="1204.5" y2="403.9" stroke="#333" stroke-width="1"/>
<line x1="1830.3" y1="403.9" x2="1836.3" y2="403.9" stroke="#333" stroke-width="1"/>
<line x1="1198.5" y1="439.6" x2="1204.5" y2="439.6" stroke="#333" stroke-width="1"/>
<line x1="1830.3" y1="439.6" x2="1836.3" y2="439.6" stroke="#333" stroke-width="1"/>
<line x1="1198.5" y1="475.3" x2="1204.5" y2="475.3" stroke="#333" stroke-width="1"/>
<line x1="1830.3" y1="475.3" x2="1836.3" y2="475.3" stroke="#333" stroke-width="1"/>
<line x1="1204.5" y1="475.3" x2="1204.5" y2="480.3" stroke="#333" stroke-width="1"/>
<line x1="1308.8" y1="475.3" x2="1308.8" y2="480.3" stroke="#333" stroke-width="1"/>
<line x1="1413.1" y1="475.3" x2="1413.1" y2="480.3" stroke="#333" stroke-width="1"/>
<line x1="1517.4" y1="475.3" x2="1517.4" y2="480.3" stroke="#333" stroke-width="1"/>
<line x1="1621.7" y1="475.3" x2="1621.7" y2="480.3" stroke="#333" stroke-width="1"/>
<line x1="1726" y1="475.3" x2="1726" y2="480.3" stroke="#333" stroke-width="1"/>
<line x1="1830.3" y1="475.3" x2="1830.3" y2="480.3" stroke="#333" stroke-width="1"/>
<polyline fill="none" stroke="#ff0000" stroke-width="2" stroke-linejoin="round" points="1217.28,375.7 1243.35,407.47 1269.43,349.99 1295.5,392.12 1321.58,364.99 1347.65,298.23 1373.73,318.22 1399.8,457.09 1425.88,378.55 1451.95,288.23 1478.03,388.55 1504.1,443.53 1530.18,434.25 1556.25,322.15 1582.33,283.95 1608.4,439.6"/>
<polyline fill="none" stroke="#00a844" stroke-width="2" stroke-linejoin="round" points="1217.28,400.15 1243.35,363.56 1269.43,347.49 1295.5,330.36 1321.58,335.18 1347.65,360.17 1373.73,375.52 1399.8,336.43 1425.88,302.87 1451.95,357.85 1478.03,341.96 1504.1,371.41 1530.18,305.73 1556.25,371.95 1582.33,310.37 1608.4,288.77"/>
<circle cx="1217.28" cy="375.7" r="3" fill="#fff" stroke="#ff0000" stroke-width="2"/>
<circle cx="1243.35" cy="407.47" r="3" fill="#fff" stroke="#ff0000" stroke-width="2"/>
<circle cx="1269.43" cy="349.99" r="3" fill="#fff" stroke="#ff0000" stroke-width="2"/>
<circle cx="1295.5" cy="392.12" r="3" fill="#fff" stroke="#ff0000" stroke-width="2"/>
<circle cx="1321.58" cy="364.99" r="3" fill="#fff" stroke="#ff0000" stroke-width="2"/>
<circle cx="1347.65" cy="298.23" r="3" fill="#fff" stroke="#ff0000" stroke-width="2"/>
<circle cx="1373.73" cy="318.22" r="3" fill="#fff" stroke="#ff0000" stroke-width="2"/>
<circle cx="1399.8" cy="457.09" r="3" fill="#fff" stroke="#ff0000" stroke-width="2"/>
<circle cx="1425.88" cy="378.55" r="3" fill="#fff" stroke="#ff0000" stroke-width="2"/>
<circle cx="1451.95" cy="288.23" r="3" fill="#fff" stroke="#ff0000" stroke-width="2"/>
<circle cx="1478.03" cy="388.55" r="3" fill="#fff" stroke="#ff0000" stroke-width="2"/>
<circle cx="1504.1" cy="443.53" r="3" fill="#fff" stroke="#ff0000" stroke-width="2"/>
<circle cx="1530.18" cy="434.25" r="3" fill="#fff" stroke="#ff0000" stroke-width="2"/>
<circle cx="1556.25" cy="322.15" r="3" fill="#fff" stroke="#ff0000" stroke-width="2"/>
<circle cx="1582.33" cy="283.95" r="3" fill="#fff" stroke="#ff0000" stroke-width="2"/>
<circle cx="1608.4" cy="439.6" r="3" fill="#fff" stroke="#ff0000" stroke-width="2"/>
<circle cx="1217.28" cy="400.15" r="3" fill="#fff" stroke="#00a844" stroke-width="2"/>
<circle cx="1243.35" cy="363.56" r="3" fill="#fff" stroke="#00a844" stroke-width="2"/>
<circle cx="1269.43" cy="347.49" r="3" fill="#fff" stroke="#00a844" stroke-width="2"/>
<circle cx="1295.5" cy="330.36" r="3" fill="#fff" stroke="#00a844" stroke-width="2"/>
<circle cx="1321.58" cy="335.18" r="3" fill="#fff" stroke="#00a844" stroke-width="2"/>
<circle cx="1347.65" cy="360.17" r="3" fill="#fff" stroke="#00a844" stroke-width="2"/>
<circle cx="1373.73" cy="375.52" r="3" fill="#fff" stroke="#00a844" stroke-width="2"/>
<circle cx="1399.8" cy="336.43" r="3" fill="#fff" stroke="#00a844" stroke-width="2"/>
<circle cx="1425.88" cy="302.87" r="3" fill="#fff" stroke="#00a844" stroke-width="2"/>
<circle cx="1451.95" cy="357.85" r="3" fill="#fff" stroke="#00a844" stroke-width="2"/>
<circle cx="1478.03" cy="341.96" r="3" fill="#fff" stroke="#00a844" stroke-width="2"/>
<circle cx="1504.1" cy="371.41" r="3" fill="#fff" stroke="#00a844" stroke-width="2"/>
<circle cx="1530.18" cy="305.73" r="3" fill="#fff" stroke="#00a844" stroke-width="2"/>
<circle cx="1556.25" cy="371.95" r="3" fill="#fff" stroke="#00a844" stroke-width="2"/>
<circle cx="1582.33" cy="310.37" r="3" fill="#fff" stroke="#00a844" stroke-width="2"/>
<circle cx="1608.4" cy="288.77" r="3" fill="#fff" stroke="#00a844" stroke-width="2"/>
<path d="M1208.3,515.3 Q1208.3,512.3 1211.3,512.3 L1830.3,512.3 Q1833.3,512.3 1833.3,515.3 L1833.3,521.4 L1208.3,521.4 Z" fill="#dee6f2"/>
<rect x="1208.3" y="521.4" width="625" height="36.4" fill="#e6eefc"/>
<line x1="1208.3" y1="521.9" x2="1833.3" y2="521.9" stroke="#d0dcf0" stroke-width="1" stroke-dasharray="2,2"/>
<path d="M1208.3,540.28 L1249.97,544.45 L1291.63,536.9 L1333.3,542.44 L1374.97,538.87 L1416.63,530.1 L1458.3,532.73 L1499.97,550.97 L1541.63,540.66 L1583.3,528.79 L1624.97,541.97 L1666.63,549.19 L1708.3,547.97 L1749.97,533.24 L1791.63,528.22 L1833.3,548.68 L1833.3,557.8 L1208.3,557.8 Z" fill="#d3e2fb"/>
<path d="M1208.3,540.28 L1249.97,544.45 L1291.63,536.9 L1333.3,542.44 L1374.97,538.87 L1416.63,530.1 L1458.3,532.73 L1499.97,550.97 L1541.63,540.66 L1583.3,528.79 L1624.97,541.97 L1666.63,549.19 L1708.3,547.97 L1749.97,533.24 L1791.63,528.22 L1833.3,548.68" fill="none" stroke="#8fb0f7" stroke-width="0.8"/>
<rect x="1517.2" y="514.8" width="1.2" height="4" fill="#fff"/>
<rect x="1520.2" y="514.8" width="1.2" height="4" fill="#fff"/>
<rect x="1523.2" y="514.8" width="1.2" height="4" fill="#fff"/>
<line x1="1209.3" y1="521.4" x2="1209.3" y2="557.8" stroke="#b0bcd4" stroke-width="1"/>
<rect x="1205.7" y="527.4" width="7.2" height="24" rx="3.2" fill="#fff" stroke="#acb8d1" stroke-width="1"/>
<line x1="1832.3" y1="521.4" x2="1832.3" y2="557.8" stroke="#b0bcd4" stroke-width="1"/>
<rect x="1828.7" y="527.4" width="7.2" height="24" rx="3.2" fill="#fff" stroke="#acb8d1" stroke-width="1"/>
<circle cx="1422.5" cy="582.9" r="5" fill="#ff0000"/>
<circle cx="1542.6" cy="582.9" r="5" fill="#00a844"/>
</svg>
<div class="t" style="left:1200.28px;top:352px;font-size:14.29px;font-weight:normal;color:#4d4d4d;transform:scaleX(0.9237);transform-origin:0 0;">25 °C</div>
<div class="t" style="left:1202.45px;top:376px;font-size:14.29px;font-weight:normal;color:#4d4d4d;transform:scaleX(0.8957);transform-origin:0 0;">34 %</div>
<div class="t" style="left:1226.35px;top:384px;font-size:14.29px;font-weight:normal;color:#4d4d4d;transform:scaleX(0.9237);transform-origin:0 0;">24 °C</div>
<div class="t" style="left:1228.53px;top:340px;font-size:14.29px;font-weight:normal;color:#4d4d4d;transform:scaleX(0.8957);transform-origin:0 0;">36 %</div>
<div class="t" style="left:1252.43px;top:326px;font-size:14.29px;font-weight:normal;color:#4d4d4d;transform:scaleX(0.9237);transform-origin:0 0;">26 °C</div>
<div class="t" style="left:1254.60px;top:324px;font-size:14.29px;font-weight:normal;color:#4d4d4d;transform:scaleX(0.8957);transform-origin:0 0;">37 %</div>
<div class="t" style="left:1278.50px;top:368px;font-size:14.29px;font-weight:normal;color:#4d4d4d;transform:scaleX(0.9237);transform-origin:0 0;">24 °C</div>
<div class="t" style="left:1280.68px;top:307px;font-size:14.29px;font-weight:normal;color:#4d4d4d;transform:scaleX(0.8957);transform-origin:0 0;">38 %</div>
<div class="t" style="left:1304.58px;top:341px;font-size:14.29px;font-weight:normal;color:#4d4d4d;transform:scaleX(0.9237);transform-origin:0 0;">25 °C</div>
<div class="t" style="left:1306.75px;top:311px;font-size:14.29px;font-weight:normal;color:#4d4d4d;transform:scaleX(0.8957);transform-origin:0 0;">38 %</div>
<div class="t" style="left:1330.65px;top:274px;font-size:14.29px;font-weight:normal;color:#4d4d4d;transform:scaleX(0.9237);transform-origin:0 0;">27 °C</div>
<div class="t" style="left:1332.83px;top:336px;font-size:14.29px;font-weight:normal;color:#4d4d4d;transform:scaleX(0.8957);transform-origin:0 0;">36 %</div>
<div class="t" style="left:1356.73px;top:294px;font-size:14.29px;font-weight:normal;color:#4d4d4d;transform:scaleX(0.9237);transform-origin:0 0;">26 °C</div>
<div class="t" style="left:1358.90px;top:352px;font-size:14.29px;font-weight:normal;color:#4d4d4d;transform:scaleX(0.8957);transform-origin:0 0;">36 %</div>
<div class="t" style="left:1382.80px;top:433px;font-size:14.29px;font-weight:normal;color:#4d4d4d;transform:scaleX(0.9237);transform-origin:0 0;">22 °C</div>
<div class="t" style="left:1384.98px;top:313px;font-size:14.29px;font-weight:normal;color:#4d4d4d;transform:scaleX(0.8957);transform-origin:0 0;">38 %</div>
<div class="t" style="left:1408.88px;top:355px;font-size:14.29px;font-weight:normal;color:#4d4d4d;transform:scaleX(0.9237);transform-origin:0 0;">25 °C</div>
<div class="t" style="left:1412.08px;top:279px;font-size:14.29px;font-weight:normal;color:#4d4d4d;transform:scaleX(0.8559);transform-origin:0 0;">40 %</div>
<div class="t" style="left:1434.95px;top:264px;font-size:14.29px;font-weight:normal;color:#4d4d4d;transform:scaleX(0.9237);transform-origin:0 0;">27 °C</div>
<div class="t" style="left:1437.13px;top:334px;font-size:14.29px;font-weight:normal;color:#4d4d4d;transform:scaleX(0.8957);transform-origin:0 0;">37 %</div>
<div class="t" style="left:1461.03px;top:365px;font-size:14.29px;font-weight:normal;color:#4d4d4d;transform:scaleX(0.9237);transform-origin:0 0;">24 °C</div>
<div class="t" style="left:1463.20px;top:318px;font-size:14.29px;font-weight:normal;color:#4d4d4d;transform:scaleX(0.8957);transform-origin:0 0;">37 %</div>
<div class="t" style="left:1487.10px;top:420px;font-size:14.29px;font-weight:normal;color:#4d4d4d;transform:scaleX(0.9237);transform-origin:0 0;">23 °C</div>
<div class="t" style="left:1489.28px;top:348px;font-size:14.29px;font-weight:normal;color:#4d4d4d;transform:scaleX(0.8957);transform-origin:0 0;">36 %</div>
<div class="t" style="left:1513.18px;top:410px;font-size:14.29px;font-weight:normal;color:#4d4d4d;transform:scaleX(0.9237);transform-origin:0 0;">23 °C</div>
<div class="t" style="left:1515.35px;top:282px;font-size:14.29px;font-weight:normal;color:#4d4d4d;transform:scaleX(0.8957);transform-origin:0 0;">39 %</div>
<div class="t" style="left:1539.25px;top:298px;font-size:14.29px;font-weight:normal;color:#4d4d4d;transform:scaleX(0.9237);transform-origin:0 0;">26 °C</div>
<div class="t" style="left:1541.43px;top:348px;font-size:14.29px;font-weight:normal;color:#4d4d4d;transform:scaleX(0.8957);transform-origin:0 0;">36 %</div>
<div class="t" style="left:1565.33px;top:260px;font-size:14.29px;font-weight:normal;color:#4d4d4d;transform:scaleX(0.9237);transform-origin:0 0;">27 °C</div>
<div class="t" style="left:1567.50px;top:287px;font-size:14.29px;font-weight:normal;color:#4d4d4d;transform:scaleX(0.8957);transform-origin:0 0;">39 %</div>
<div class="t" style="left:1591.40px;top:416px;font-size:14.29px;font-weight:normal;color:#4d4d4d;transform:scaleX(0.9237);transform-origin:0 0;">23 °C</div>
<div class="t" style="left:1594.60px;top:265px;font-size:14.29px;font-weight:normal;color:#4d4d4d;transform:scaleX(0.8559);transform-origin:0 0;">40 %</div>
<div class="t" style="left:1157.90px;top:254px;font-size:14.57px;font-weight:normal;color:#6e6e6e;transform:scaleX(0.9962);transform-origin:0 0;">28 °C</div>
<div class="t" style="left:1840.00px;top:253px;font-size:15.14px;font-weight:normal;color:#6e6e6e;transform:scaleX(0.9201);transform-origin:0 0;">42 %</div>
<div class="t" style="left:1157.90px;top:290px;font-size:14.57px;font-weight:normal;color:#6e6e6e;transform:scaleX(0.9962);transform-origin:0 0;">27 °C</div>
<div class="t" style="left:1840.00px;top:289px;font-size:15.14px;font-weight:normal;color:#6e6e6e;transform:scaleX(0.9201);transform-origin:0 0;">40 %</div>
<div class="t" style="left:1157.90px;top:326px;font-size:14.57px;font-weight:normal;color:#6e6e6e;transform:scaleX(0.9962);transform-origin:0 0;">26 °C</div>
<div class="t" style="left:1839.00px;top:325px;font-size:15.14px;font-weight:normal;color:#6e6e6e;transform:scaleX(0.9284);transform-origin:0 0;">38 %</div>
<div class="t" style="left:1157.90px;top:361px;font-size:14.57px;font-weight:normal;color:#6e6e6e;transform:scaleX(0.9962);transform-origin:0 0;">25 °C</div>
<div class="t" style="left:1839.00px;top:360px;font-size:15.14px;font-weight:normal;color:#6e6e6e;transform:scaleX(0.9284);transform-origin:0 0;">36 %</div>
<div class="t" style="left:1157.90px;top:397px;font-size:14.57px;font-weight:normal;color:#6e6e6e;transform:scaleX(0.9962);transform-origin:0 0;">24 °C</div>
<div class="t" style="left:1839.00px;top:396px;font-size:15.14px;font-weight:normal;color:#6e6e6e;transform:scaleX(0.9284);transform-origin:0 0;">34 %</div>
<div class="t" style="left:1157.90px;top:433px;font-size:14.57px;font-weight:normal;color:#6e6e6e;transform:scaleX(0.9962);transform-origin:0 0;">23 °C</div>
<div class="t" style="left:1839.00px;top:432px;font-size:15.14px;font-weight:normal;color:#6e6e6e;transform:scaleX(0.9284);transform-origin:0 0;">32 %</div>
<div class="t" style="left:1157.90px;top:468px;font-size:14.57px;font-weight:normal;color:#6e6e6e;transform:scaleX(0.9962);transform-origin:0 0;">22 °C</div>
<div class="t" style="left:1839.00px;top:468px;font-size:15.14px;font-weight:normal;color:#6e6e6e;transform:scaleX(0.9284);transform-origin:0 0;">30 %</div>
<div class="t" style="left:1180.50px;top:486px;font-size:14.78px;font-weight:bold;color:#6e6e6e;">Dec 17</div>
<div class="t" style="left:1293.30px;top:486px;font-size:12.43px;font-weight:normal;color:#6e6e6e;">04:00</div>
<div class="t" style="left:1397.60px;top:486px;font-size:12.43px;font-weight:normal;color:#6e6e6e;">08:00</div>
<div class="t" style="left:1501.40px;top:486px;font-size:12.43px;font-weight:normal;color:#6e6e6e;">12:00</div>
<div class="t" style="left:1605.70px;top:486px;font-size:12.43px;font-weight:normal;color:#6e6e6e;">16:00</div>
<div class="t" style="left:1710.00px;top:486px;font-size:12.43px;font-weight:normal;color:#6e6e6e;">20:00</div>
<div class="t" style="left:1145px;top:368px;font-size:14px;font-weight:bold;color:#6e6e6e;transform:translate(-50%,-50%) rotate(-90deg)">Temperature</div>
<div class="t" style="left:1884.5px;top:367.5px;font-size:14px;font-weight:bold;color:#6e6e6e;transform:translate(-50%,-50%) rotate(90deg)">Humidity</div>
<div class="t" style="left:1433.20px;top:575px;font-size:15.36px;font-weight:normal;color:#444;transform:scaleX(0.9805);transform-origin:0 0;">Temperature</div>
<div class="t" style="left:1552.51px;top:575px;font-size:15.36px;font-weight:normal;color:#444;transform:scaleX(0.9876);transform-origin:0 0;">Humidity</div>
<div class="t" style="left:1138.10px;top:640px;font-size:21.45px;font-weight:normal;color:#1a1a1a;transform:scaleX(0.9264);transform-origin:0 0;-webkit-text-stroke:0.45px #1a1a1a;">Air Quality</div>
<div class="t" style="left:1137.10px;top:667px;font-size:15.22px;font-weight:normal;color:#a8a8a8;transform:scaleX(0.9561);transform-origin:0 0;">Realtime - Current day</div>
<svg class="abs" style="left:1864.5px;top:637.3px;width:26.5px;height:26.5px;fill:#222" viewBox="0 0 24 24"><path d="M7 14H5v5h5v-2H7v-3zm-2-4h2V7h3V5H5v5zm12 7h-3v2h5v-5h-2v3zM14 5v2h3v3h2V5h-5z"/></svg>
<svg class="abs" style="left:0;top:0;width:1920px;height:1080px;overflow:visible" viewBox="0 0 1920 1080">
<line x1="1228.5" y1="708" x2="1886.7" y2="708" stroke="#dedede" stroke-width="1"/>
<line x1="1228.5" y1="726.97" x2="1886.7" y2="726.97" stroke="#dedede" stroke-width="1"/>
<line x1="1228.5" y1="745.94" x2="1886.7" y2="745.94" stroke="#dedede" stroke-width="1"/>
<line x1="1228.5" y1="764.91" x2="1886.7" y2="764.91" stroke="#dedede" stroke-width="1"/>
<line x1="1228.5" y1="783.89" x2="1886.7" y2="783.89" stroke="#dedede" stroke-width="1"/>
<line x1="1228.5" y1="802.86" x2="1886.7" y2="802.86" stroke="#dedede" stroke-width="1"/>
<line x1="1228.5" y1="821.83" x2="1886.7" y2="821.83" stroke="#dedede" stroke-width="1"/>
<line x1="1228.5" y1="840.8" x2="1886.7" y2="840.8" stroke="#dedede" stroke-width="1"/>
<line x1="1338.2" y1="708" x2="1338.2" y2="840.8" stroke="#d2d2d2" stroke-width="1"/>
<line x1="1447.9" y1="708" x2="1447.9" y2="840.8" stroke="#d2d2d2" stroke-width="1"/>
<line x1="1557.6" y1="708" x2="1557.6" y2="840.8" stroke="#d2d2d2" stroke-width="1"/>
<line x1="1667.3" y1="708" x2="1667.3" y2="840.8" stroke="#d2d2d2" stroke-width="1"/>
<line x1="1777" y1="708" x2="1777" y2="840.8" stroke="#d2d2d2" stroke-width="1"/>
<line x1="1886.7" y1="708" x2="1886.7" y2="840.8" stroke="#d2d2d2" stroke-width="1"/>
<line x1="1228.5" y1="708" x2="1228.5" y2="845.8" stroke="#6e6e6e" stroke-width="1"/>
<line x1="1228.5" y1="840.8" x2="1886.7" y2="840.8" stroke="#6e6e6e" stroke-width="1"/>
<line x1="1222.5" y1="708" x2="1228.5" y2="708" stroke="#6e6e6e" stroke-width="1"/>
<line x1="1222.5" y1="726.97" x2="1228.5" y2="726.97" stroke="#6e6e6e" stroke-width="1"/>
<line x1="1222.5" y1="745.94" x2="1228.5" y2="745.94" stroke="#6e6e6e" stroke-width="1"/>
<line x1="1222.5" y1="764.91" x2="1228.5" y2="764.91" stroke="#6e6e6e" stroke-width="1"/>
<line x1="1222.5" y1="783.89" x2="1228.5" y2="783.89" stroke="#6e6e6e" stroke-width="1"/>
<line x1="1222.5" y1="802.86" x2="1228.5" y2="802.86" stroke="#6e6e6e" stroke-width="1"/>
<line x1="1222.5" y1="821.83" x2="1228.5" y2="821.83" stroke="#6e6e6e" stroke-width="1"/>
<line x1="1222.5" y1="840.8" x2="1228.5" y2="840.8" stroke="#6e6e6e" stroke-width="1"/>
<line x1="1338.2" y1="840.8" x2="1338.2" y2="845.8" stroke="#6e6e6e" stroke-width="1"/>
<line x1="1447.9" y1="840.8" x2="1447.9" y2="845.8" stroke="#6e6e6e" stroke-width="1"/>
<line x1="1557.6" y1="840.8" x2="1557.6" y2="845.8" stroke="#6e6e6e" stroke-width="1"/>
<line x1="1667.3" y1="840.8" x2="1667.3" y2="845.8" stroke="#6e6e6e" stroke-width="1"/>
<line x1="1777" y1="840.8" x2="1777" y2="845.8" stroke="#6e6e6e" stroke-width="1"/>
<line x1="1886.7" y1="840.8" x2="1886.7" y2="845.8" stroke="#6e6e6e" stroke-width="1"/>
<path d="M1241.94,780.09 C1241.94,780.09 1262.25,789.87 1269.36,791.09 C1275.97,792.23 1292.41,792.23 1296.79,792.23 C1306.12,792.23 1315,740.63 1324.21,740.63 C1328.71,740.63 1346.34,748.6 1351.64,748.6 C1360.05,748.6 1374.56,712.55 1379.06,712.55 C1388.27,712.55 1397.36,800.96 1406.49,800.96 C1411.07,800.96 1426.29,772.1 1433.91,763.4 C1440,756.45 1455.82,738.35 1461.34,738.35 C1469.53,738.35 1482.19,774.06 1488.76,786.16 C1495.9,799.29 1510.06,839.28 1516.19,839.28 C1523.77,839.28 1534.32,785.97 1543.61,770.61 C1548.03,763.3 1564.32,748.6 1571.04,748.6 C1578.03,748.6 1593.12,772.88 1598.46,772.88 C1606.84,772.88 1617.13,722.42 1625.89,722.42 C1630.84,722.42 1653.31,739.87 1653.31,739.87" fill="none" stroke="#0a8fd8" stroke-width="2.6" stroke-linecap="round" stroke-linejoin="round"/>
<path d="M1231.8,880.8 Q1231.8,877.8 1234.8,877.8 L1884.8,877.8 Q1887.8,877.8 1887.8,880.8 L1887.8,886.9 L1231.8,886.9 Z" fill="#dee6f2"/>
<rect x="1231.8" y="886.9" width="656" height="36.4" fill="#e6eefc"/>
<line x1="1231.8" y1="887.4" x2="1887.8" y2="887.4" stroke="#d0dcf0" stroke-width="1" stroke-dasharray="2,2"/>
<path d="M1231.8,905.85 L1275.53,907.82 L1319.27,908.03 L1363,898.77 L1406.73,900.2 L1450.47,893.73 L1494.2,909.6 L1537.93,902.85 L1581.67,898.36 L1625.4,906.94 L1669.13,916.48 L1712.87,904.15 L1756.6,900.2 L1800.33,904.56 L1844.07,895.5 L1887.8,898.63 L1887.8,923.3 L1231.8,923.3 Z" fill="#d3e2fb"/>
<path d="M1231.8,905.85 L1275.53,907.82 L1319.27,908.03 L1363,898.77 L1406.73,900.2 L1450.47,893.73 L1494.2,909.6 L1537.93,902.85 L1581.67,898.36 L1625.4,906.94 L1669.13,916.48 L1712.87,904.15 L1756.6,900.2 L1800.33,904.56 L1844.07,895.5 L1887.8,898.63" fill="none" stroke="#8fb0f7" stroke-width="0.8"/>
<rect x="1556.2" y="880.3" width="1.2" height="4" fill="#fff"/>
<rect x="1559.2" y="880.3" width="1.2" height="4" fill="#fff"/>
<rect x="1562.2" y="880.3" width="1.2" height="4" fill="#fff"/>
<line x1="1232.8" y1="886.9" x2="1232.8" y2="923.3" stroke="#b0bcd4" stroke-width="1"/>
<rect x="1229.2" y="892.9" width="7.2" height="24" rx="3.2" fill="#fff" stroke="#acb8d1" stroke-width="1"/>
<line x1="1886.8" y1="886.9" x2="1886.8" y2="923.3" stroke="#b0bcd4" stroke-width="1"/>
<rect x="1883.2" y="892.9" width="7.2" height="24" rx="3.2" fill="#fff" stroke="#acb8d1" stroke-width="1"/>
<circle cx="1143.5" cy="980" r="5.2" fill="#0a8fd8"/>
</svg>
<div class="t" style="left:1159.20px;top:702px;font-size:13.77px;font-weight:normal;color:#6e6e6e;transform:scaleX(1.0981);transform-origin:0 0;">490 ppm</div>
<div class="t" style="left:1159.20px;top:721px;font-size:13.77px;font-weight:normal;color:#6e6e6e;transform:scaleX(1.0981);transform-origin:0 0;">485 ppm</div>
<div class="t" style="left:1159.20px;top:740px;font-size:13.77px;font-weight:normal;color:#6e6e6e;transform:scaleX(1.0981);transform-origin:0 0;">480 ppm</div>
<div class="t" style="left:1159.20px;top:759px;font-size:13.77px;font-weight:normal;color:#6e6e6e;transform:scaleX(1.0981);transform-origin:0 0;">475 ppm</div>
<div class="t" style="left:1159.20px;top:778px;font-size:13.77px;font-weight:normal;color:#6e6e6e;transform:scaleX(1.0981);transform-origin:0 0;">470 ppm</div>
<div class="t" style="left:1159.20px;top:797px;font-size:13.77px;font-weight:normal;color:#6e6e6e;transform:scaleX(1.0981);transform-origin:0 0;">465 ppm</div>
<div class="t" style="left:1159.20px;top:816px;font-size:13.77px;font-weight:normal;color:#6e6e6e;transform:scaleX(1.0981);transform-origin:0 0;">460 ppm</div>
<div class="t" style="left:1159.20px;top:835px;font-size:13.77px;font-weight:normal;color:#6e6e6e;transform:scaleX(1.0981);transform-origin:0 0;">455 ppm</div>
<div class="t" style="left:1204.50px;top:851px;font-size:14.78px;font-weight:bold;color:#6e6e6e;">Dec 17</div>
<div class="t" style="left:1322.70px;top:851px;font-size:12.43px;font-weight:normal;color:#6e6e6e;">04:00</div>
<div class="t" style="left:1432.40px;top:851px;font-size:12.43px;font-weight:normal;color:#6e6e6e;">08:00</div>
<div class="t" style="left:1541.60px;top:851px;font-size:12.43px;font-weight:normal;color:#6e6e6e;">12:00</div>
<div class="t" style="left:1651.30px;top:851px;font-size:12.43px;font-weight:normal;color:#6e6e6e;">16:00</div>
<div class="t" style="left:1761.00px;top:851px;font-size:12.43px;font-weight:normal;color:#6e6e6e;">20:00</div>
<div class="t" style="left:1145px;top:773.75px;font-size:14px;font-weight:bold;color:#6e6e6e;transform:translate(-50%,-50%) rotate(-90deg)">CO2 level</div>
<div class="t" style="left:1153.50px;top:973px;font-size:14.86px;font-weight:normal;color:#444;transform:scaleX(0.9573);transform-origin:0 0;">CO2 level</div>
<div class="t" style="left:1704.84px;top:941px;font-size:15.65px;font-weight:normal;color:#a0a0a0;transform:scaleX(1.0132);transform-origin:0 0;">Min</div>
<div class="t" style="left:1781.41px;top:941px;font-size:15.65px;font-weight:normal;color:#a0a0a0;transform:scaleX(0.9797);transform-origin:0 0;">Max</div>
<div class="t" style="left:1866.70px;top:941px;font-size:15.65px;font-weight:normal;color:#a0a0a0;transform:scaleX(0.9428);transform-origin:0 0;">Avg</div>
<div class="t" style="left:1671.40px;top:972px;font-size:15.65px;font-weight:normal;color:#222;transform:scaleX(0.9727);transform-origin:0 0;-webkit-text-stroke:0.6px #222;">455 ppm</div>
<div class="t" style="left:1751.80px;top:972px;font-size:15.65px;font-weight:normal;color:#222;transform:scaleX(0.9693);transform-origin:0 0;-webkit-text-stroke:0.6px #222;">489 ppm</div>
<div class="t" style="left:1832.10px;top:972px;font-size:15.65px;font-weight:normal;color:#222;transform:scaleX(0.9793);transform-origin:0 0;-webkit-text-stroke:0.6px #222;">475 ppm</div>
</body></html>
